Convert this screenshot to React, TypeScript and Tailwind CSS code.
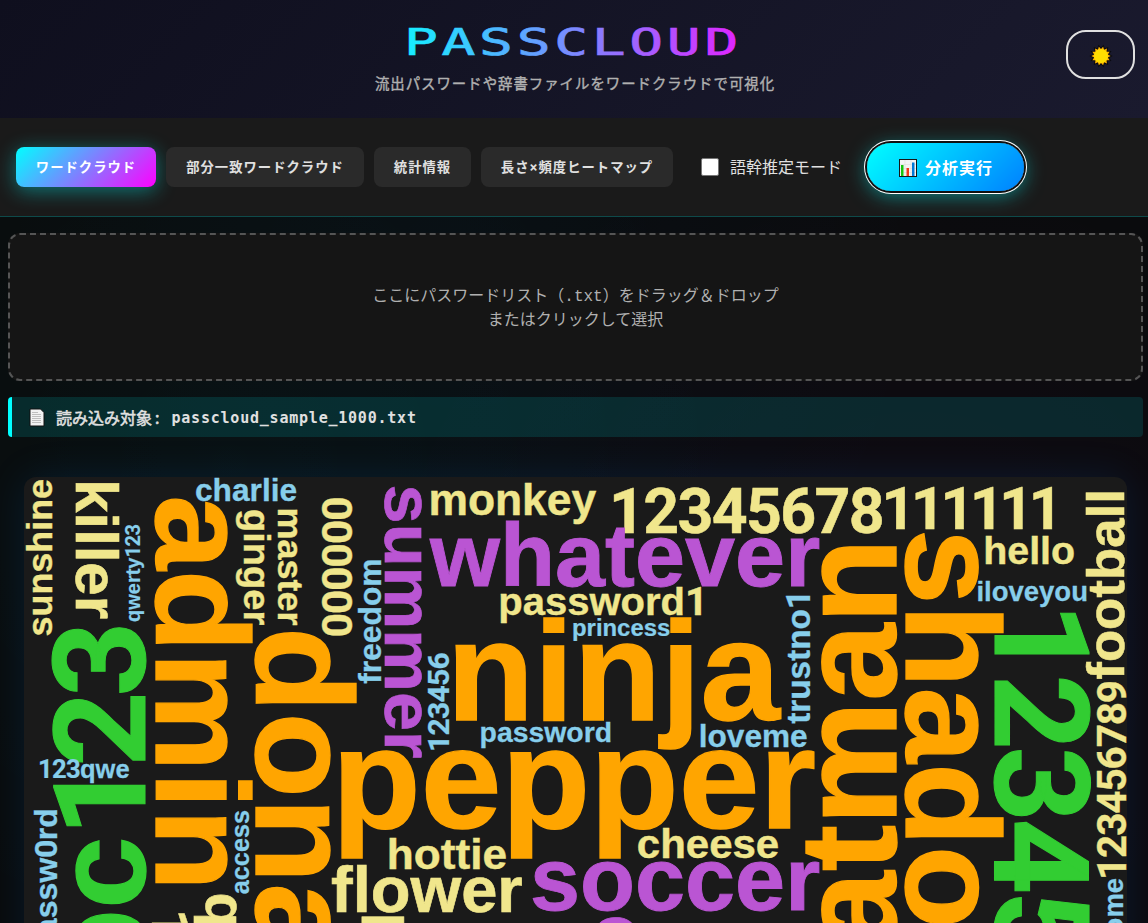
import React from "react";

type Word = {
  t: string;
  s: number;
  x: number;
  y: number;
  r?: number;
  c: string;
  ls?: number;
};

const Y = "#f0e68c";
const B = "#87ceeb";
const O = "#ffa500";
const P = "#ba55d3";
const G = "#32cd32";

const words: Word[] = [
  { t: "sunshine", s: 35.9, x: 52, y: 636.5, r: -90, c: Y },
  { t: "killer", s: 60, x: 76, y: 479, r: 90, c: Y },
  { t: "qwerty123", s: 20, x: 139.5, y: 622, r: -90, c: B },
  { t: "admin", s: 134.4, x: 156, y: 495.2, r: 90, c: O },
  { t: "ginger", s: 38, x: 244.3, y: 509.1, r: 90, c: Y },
  { t: "master", s: 36, x: 278.3, y: 507.6, r: 90, c: Y },
  { t: "charlie", s: 31.7, x: 195, y: 501, c: B },
  { t: "000000", s: 42.3, x: 321.9, y: 496.6, r: 90, c: Y },
  { t: "freedom", s: 31.8, x: 381, y: 683.8, r: -90, c: B },
  { t: "abc123", s: 130, x: 145, y: 1060.5, r: -90, c: G, ls: -0.012 },
  { t: "123qwe", s: 25.5, x: 38, y: 777.7, c: B },
  { t: "passw0rd", s: 32, x: 57, y: 955.7, r: -90, c: B },
  { t: "access", s: 25.3, x: 249.3, y: 894.3, r: -90, c: B },
  { t: "donald", s: 139.8, x: 256, y: 627, r: 90, c: O },
  { t: "qwerty", s: 58.5, x: 206.3, y: 892.6, r: 90, c: Y },
  { t: "1q2w3e4r", s: 55, x: 151.7, y: 909, r: 90, c: Y },
  { t: "flower", s: 65.1, x: 331, y: 912, c: Y },
  { t: "hottie", s: 44.2, x: 386.8, y: 868.7, c: Y },
  { t: "monkey", s: 44.4, x: 428.4, y: 514.7, c: Y },
  { t: "12345678", s: 62.3, x: 608.9, y: 532.7, c: Y },
  { t: "111111", s: 58.7, x: 881.5, y: 529, c: Y, ls: -0.048 },
  { t: "whatever", s: 90, x: 430, y: 585.7, c: P },
  { t: "password1", s: 40, x: 498.3, y: 614.7, c: Y },
  { t: "princess", s: 23.9, x: 572, y: 635.7, c: B },
  { t: "ninja", s: 142.8, x: 446.8, y: 719.7, c: O },
  { t: "summer", s: 70.4, x: 384.7, y: 484.6, r: 90, c: P },
  { t: "123456", s: 30, x: 448.7, y: 752, r: -90, c: B },
  { t: "password", s: 28.4, x: 479.6, y: 742.3, c: B },
  { t: "loveme", s: 31.6, x: 698.8, y: 746.7, c: B },
  { t: "pepper", s: 145.2, x: 332, y: 827.7, c: O },
  { t: "cheese", s: 42, x: 636.8, y: 858.2, c: Y },
  { t: "soccer", s: 90, x: 530, y: 910, c: P },
  { t: "trustno1", s: 33.3, x: 810, y: 723.8, r: -90, c: B },
  { t: "batman", s: 139.4, x: 896, y: 1034, r: -90, c: O },
  { t: "shadow", s: 135.8, x: 906, y: 529, r: 90, c: O },
  { t: "hello", s: 39.4, x: 983.2, y: 563.7, c: Y },
  { t: "iloveyou", s: 27.5, x: 976.4, y: 600.7, c: B },
  { t: "football", s: 52.8, x: 1124.3, y: 679.7, r: -90, c: Y },
  { t: "123456789", s: 40.2, x: 1125.7, y: 880, r: -90, c: Y },
  { t: "12345", s: 131, x: 995.3, y: 602.5, r: 90, c: G },
  { t: "welcome", s: 27.5, x: 1122.7, y: 994, r: -90, c: B },
  { t: "7", s: 83, x: 359.5, y: 976, c: Y },
  { t: "tom0", s: 98, x: 408, y: 987, c: P },
];

function CloudWord({ w }: { w: Word }) {
  const runs = w.t.match(/\d+|\D+/g) ?? [];
  const scaleY = /^\d+$/.test(w.t) ? 1 : 0.982;
  return (
    <text
      transform={`translate(${w.x} ${w.y}) rotate(${w.r ?? 0}) scale(1 ${scaleY})`}
      fontSize={w.s}
      fill={w.c}
      stroke={w.c}
      fontWeight={700}
      fontFamily='"Liberation Sans", Arial, sans-serif'
    >
      {runs.map((run, i) =>
        /\d/.test(run) ? (
          <tspan
            key={i}
            strokeWidth={w.s * 0.008}
            fontFamily="Roboto, sans-serif"
            fontSize={w.s * 1.005}
            letterSpacing={w.s * (-0.0265 + (w.ls ?? 0))}
          >
            {run}
          </tspan>
        ) : (
          <tspan key={i} strokeWidth={w.s * 0.01}>
            {run}
          </tspan>
        )
      )}
    </text>
  );
}

function Logo() {
  return (
    <svg width="350" height="44" viewBox="0 0 350 44" className="block overflow-visible" role="img" aria-label="PASSCLOUD">
      <defs>
        <linearGradient id="logo" gradientUnits="userSpaceOnUse" x1="0" y1="0" x2="236" y2="0">
          <stop offset="0" stopColor="#14f0ff" />
          <stop offset="1" stopColor="#e81cff" />
        </linearGradient>
      </defs>
      <text
        transform="translate(4 36.6) scale(1.48 1)"
        fontFamily='"DejaVu Sans Mono", monospace'
        fontSize="38"
        letterSpacing="2.5"
        fill="url(#logo)"
        stroke="url(#logo)"
        strokeWidth="0.7"
      >
        PASSCLOUD
      </text>
    </svg>
  );
}

function Sun() {
  const pts = Array.from({ length: 28 }, (_, i) => {
    const r = i % 2 ? 7 : 9.6;
    const a = ((i + 1) * Math.PI) / 14;
    return `${(12 + r * Math.sin(a)).toFixed(2)},${(12 - r * Math.cos(a)).toFixed(2)}`;
  }).join(" ");
  return (
    <svg width="24" height="24" viewBox="0 0 24 24">
      <polygon points={pts} fill="#ffb300" stroke="#0b0b10" strokeWidth="2" paintOrder="stroke" />
      <circle cx="12" cy="12" r="7" fill="#ffde00" />
    </svg>
  );
}

function BarChart() {
  return (
    <svg width="18" height="18" viewBox="0 0 18 18">
      <rect x="0.5" y="0.5" width="17" height="17" fill="#f4f4f4" stroke="#161616" />
      <path d="M1 5.5h16M1 9.5h16M1 13.5h16M6 1v16M12 1v16" stroke="#dcdcdc" strokeWidth="0.6" />
      <rect x="2" y="6" width="2.5" height="11" fill="#16c60c" />
      <rect x="7.5" y="9" width="2.5" height="8" fill="#f03a17" />
      <rect x="13" y="3.5" width="2.5" height="13.5" fill="#0078d7" />
    </svg>
  );
}

function Page() {
  return (
    <svg width="16" height="19" viewBox="0 0 16 19">
      <path d="M1 1h10.500l3.500 3.500V18H1z" fill="#f2f2f2" stroke="#111" strokeWidth="1" />
      <path d="M3 4.500h6M3 6.500h9M3 8.500h9M3 10.500h9M3 12.500h9M3 14.500h9" stroke="#b8b8b8" strokeWidth="0.9" />
    </svg>
  );
}

const tab = "flex h-10 items-center justify-center rounded-lg text-[13.333px] font-bold tracking-[1px] whitespace-nowrap";

export default function App() {
  return (
    <div className="h-[923px] w-full overflow-hidden bg-[#090b0c] bg-[radial-gradient(circle_at_20%_50%,rgba(0,255,255,0.025)_0%,transparent_50%),radial-gradient(circle_at_80%_70%,rgba(255,0,255,0.03)_0%,transparent_50%),radial-gradient(circle_at_40%_30%,rgba(0,128,255,0.03)_0%,transparent_50%)] font-['Noto_Sans_CJK_JP',sans-serif] text-[#e0e0e0]">
      <header className="flex h-[118px] items-start bg-[linear-gradient(135deg,#0f0f1e_0%,#1a1a2e_100%)]">
        <div className="w-[82px]" />
        <div className="flex flex-1 flex-col items-center pt-[18px] pl-[2px]">
          <Logo />
          <p className="mt-[10px] text-[14.4px] leading-[21px] tracking-[1px] text-[#b0b0b0] [-webkit-text-stroke:0.4px_#b0b0b0]">
            流出パスワードや辞書ファイルをワードクラウドで可視化
          </p>
        </div>
        <button className="mt-[30px] mr-[13px] flex h-[49px] w-[69px] items-center justify-center rounded-[20px] border-2 border-[#e0e0e0] pt-[3px]">
          <Sun />
        </button>
      </header>

      <nav className="flex h-[99px] items-center border-b border-[#0e4a4a] bg-[#1a1a1a] pl-4">
        <button className={`${tab} w-[140px] bg-[linear-gradient(135deg,#00ffff,#ff00ff)] text-white shadow-[0_4px_20px_rgba(0,255,255,0.4)]`}>
          ワードクラウド
        </button>
        <button className={`${tab} ml-[10px] w-[198px] bg-[#2a2a2a]`}>部分一致ワードクラウド</button>
        <button className={`${tab} ml-[10px] w-[97px] bg-[#2a2a2a]`}>統計情報</button>
        <button className={`${tab} ml-[10px] w-[192px] bg-[#2a2a2a]`}>
          <span>
            長さ<span className="font-['DejaVu_Sans_Mono',monospace] leading-none">×</span>頻度ヒートマップ
          </span>
        </button>
        <label className="ml-7 flex items-center text-base whitespace-nowrap">
          <span className="mr-[11px] h-[18px] w-[18px] rounded-[2px] border border-[#767676] bg-white" />
          <span className="-mt-0.5">語幹推定モード</span>
        </label>
        <button className="ml-[25px] flex h-12 w-[157px] items-center justify-center gap-2 rounded-full bg-[linear-gradient(135deg,#00ffff,#0080ff)] pl-px text-base font-bold tracking-[1px] whitespace-nowrap text-white shadow-[0_0_0_2px_#101010,0_0_0_3px_#ffffff,0_4px_20px_rgba(0,255,255,0.5)]">
          <span className="mt-0.5">
            <BarChart />
          </span>
          分析実行
        </button>
      </nav>

      <main className="pt-4 pr-[5px] pl-2">
        <section className="flex h-[148px] flex-col items-center justify-center rounded-xl border-2 border-dashed border-[#555] bg-[#151515] pb-0.5 text-center text-base leading-6 text-[#b0b0b0]">
          <p className="h-6">
            ここにパスワードリスト（<span className="font-['Liberation_Mono',monospace] leading-none">.txt</span>）をドラッグ＆ドロップ
          </p>
          <p className="h-6">またはクリックして選択</p>
        </section>

        <div className="mt-4 flex h-10 items-center rounded border-l-4 border-[#00ffff] bg-[rgba(0,255,255,0.12)] pl-[17px]">
          <Page />
          <span className="-mt-px ml-[11px] whitespace-pre [-webkit-text-stroke:0.5px_#e0e0e0]">
            読み込み対象<span className="ml-[3px]">:</span>
          </span>
          <span className="mt-0.5 ml-3 font-['DejaVu_Sans_Mono',monospace] text-[15px] font-bold tracking-[0.78px]">
            passcloud_sample_1000.txt
          </span>
        </div>

        <section className="mt-10 mr-4 ml-4 h-[600px] rounded-xl bg-[#1a1a1a] shadow-[0_0_40px_rgba(0,128,255,0.12)]">
          <svg width="1103" height="600" viewBox="24 477 1103 600">
            {words.map((w) => (
              <CloudWord key={w.t} w={w} />
            ))}
          </svg>
        </section>
      </main>
    </div>
  );
}
